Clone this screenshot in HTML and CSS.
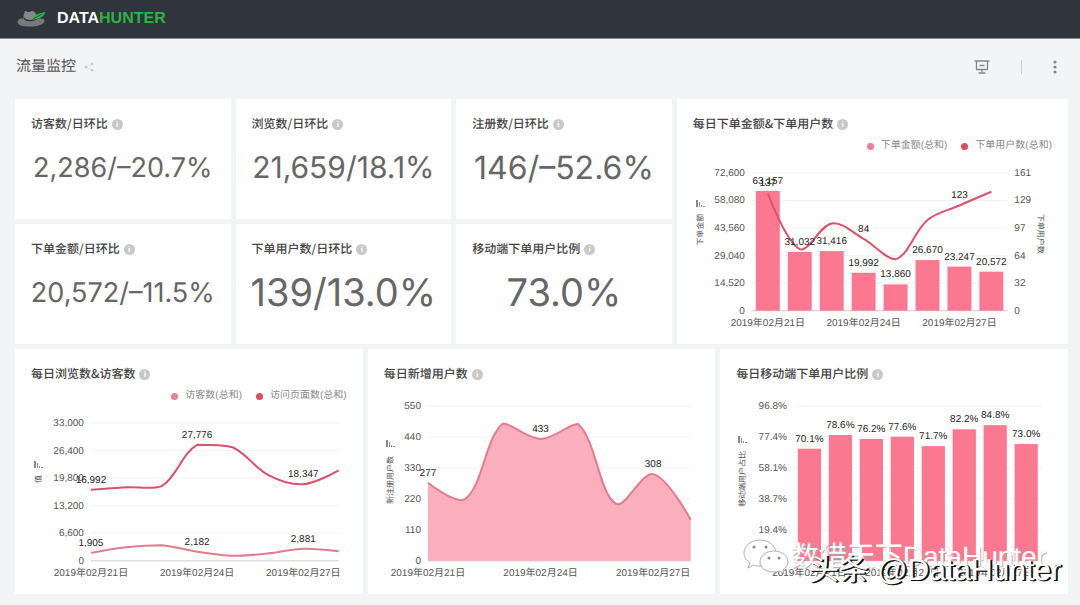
FILE: index.html
```html
<!DOCTYPE html>
<html lang="zh-CN">
<head>
    <meta charset="UTF-8">
    <meta name="viewport" content="width=device-width, initial-scale=1">
    <title>流量监控 - DataHunter</title>
    <link rel="stylesheet" href="styles.css">
</head>
<body>
    <!-- 顶部导航 -->
    <header class="navbar">
        <a href="#" class="brand">
            <svg class="brand-logo" viewBox="0 0 30 18" aria-hidden="true">
                <path d="M6.500 10 C7 6 7.500 3 8.500 1 C9.500 0.500 10.500 2 12 2 C14 2 15 0.500 16.500 1 C18.500 2 20 4 21 8 L21 12 L8 12 Z" fill="#85888a"/>
                <path d="M1 11.500 C2 8.500 5 8 7.500 8.500 C9 11.500 15 12.500 21 9 C25 8 28 8.500 28 11 C28 14.500 21 16.500 13 16.500 C5 16.500 0.500 14.500 1 11.500 Z" fill="#77797b"/>
                <path d="M7 8 C10 11.500 16 11.500 21 8.500" fill="none" stroke="#30343d" stroke-width="1.200"/>
                <path d="M15.500 9.500 C17 5 22 3 29 2 C27.500 7 22 9.500 15.500 9.500 Z" fill="#2fb344"/>
                <path d="M16 9.300 L25.500 4" stroke="#30343d" stroke-width="0.700"/>
            </svg>
            <span class="brand-name">DATA<span class="brand-green">HUNTER</span></span>
        </a>
    </header>

    <!-- 标题栏 -->
    <div class="toolbar">
        <h1>流量监控</h1>
        <button class="icon-btn share" aria-label="分享">
            <svg width="10" height="10" viewBox="0 0 10 10">
                <path d="M2 5 L8 2 M2 5 L8 8" stroke="#e6e6e6" fill="none"/>
                <circle cx="2" cy="5" r="1.500" fill="#ccc"/><circle cx="8" cy="1.800" r="1.400" fill="#ccc"/><circle cx="8" cy="8.200" r="1.400" fill="#ccc"/>
            </svg>
        </button>
        <div class="toolbar-actions">
            <button class="icon-btn" aria-label="演示">
                <svg width="16" height="14" viewBox="0 0 16 14" fill="none" stroke="#888">
                    <path d="M0.500 1 H15.500 M2.500 1 V9.500 H13.500 V1 M5.500 5.500 H10.500 M8 9.500 V13 M4.500 13 H11.500" stroke-width="1.300"/>
                </svg>
            </button>
            <span class="divider"></span>
            <button class="icon-btn" aria-label="更多">
                <svg width="4" height="14" viewBox="0 0 4 14" fill="#888">
                    <circle cx="2" cy="2" r="1.600"/><circle cx="2" cy="7" r="1.600"/><circle cx="2" cy="12" r="1.600"/>
                </svg>
            </button>
        </div>
    </div>

    <main class="board">
        <div class="row-top">
            <section class="card">
                <h2>访客数/日环比 <i class="info">i</i></h2>
                <p class="value value-sm">2,286/–20.7%</p>
            </section>
            <section class="card">
                <h2>浏览数/日环比 <i class="info">i</i></h2>
                <p class="value value-md">21,659/18.1%</p>
            </section>
            <section class="card">
                <h2>注册数/日环比 <i class="info">i</i></h2>
                <p class="value value-lg">146/–52.6%</p>
            </section>
            <section class="card card-tall">
                <h2>每日下单金额&amp;下单用户数 <i class="info">i</i></h2>
                <div class="legend">
                    <span><b class="dot dot-light"></b>下单金额(总和)</span>
                    <span><b class="dot dot-dark"></b>下单用户数(总和)</span>
                </div>
                <svg class="chart" id="chart-orders" viewBox="0 0 392 189"></svg>
            </section>
            <section class="card">
                <h2>下单金额/日环比 <i class="info">i</i></h2>
                <p class="value value-sm">20,572/–11.5%</p>
            </section>
            <section class="card">
                <h2>下单用户数/日环比 <i class="info">i</i></h2>
                <p class="value value-xl">139/13.0%</p>
            </section>
            <section class="card">
                <h2>移动端下单用户比例 <i class="info">i</i></h2>
                <p class="value value-xl">73.0%</p>
            </section>
        </div>

        <div class="row-bottom">
            <section class="card">
                <h2>每日浏览数&amp;访客数 <i class="info">i</i></h2>
                <div class="legend">
                    <span><b class="dot dot-soft"></b>访客数(总和)</span>
                    <span><b class="dot dot-dark"></b>访问页面数(总和)</span>
                </div>
                <svg class="chart" id="chart-views" viewBox="0 0 348 189"></svg>
            </section>
            <section class="card">
                <h2>每日新增用户数 <i class="info">i</i></h2>
                <svg class="chart" id="chart-users" viewBox="0 0 348 211"></svg>
            </section>
            <section class="card">
                <h2>每日移动端下单用户比例 <i class="info">i</i></h2>
                <svg class="chart" id="chart-mobile" viewBox="0 0 348 211"></svg>
                <!-- 水印 -->
                <div class="mark mark-wechat">
                    <svg width="46" height="36" viewBox="0 0 46 36" fill="#fff" stroke="#999" stroke-width="0.800">
                        <path d="M17 1 C8 1 1 7 1 14 C1 18 3 21 7 24 L5 29 L11 26 C13 27 15 27 18 27 C27 27 33 21 33 14 C33 7 26 1 17 1 Z"/>
                        <path d="M31 12 C23 12 17 17 17 23 C17 29 23 33 31 33 C33 33 35 33 37 32 L41 35 L40 31 C43 29 45 26 45 23 C45 17 39 12 31 12 Z"/>
                        <g fill="#888" stroke="none"><circle cx="11" cy="8" r="1.500"/><circle cx="23" cy="8" r="1.500"/><circle cx="26" cy="19" r="1.500"/><circle cx="36" cy="19" r="1.500"/></g>
                    </svg>
                    <span>数猎天下DataHunter</span>
                </div>
                <div class="mark mark-toutiao">头条 @DataHunter</div>
            </section>
        </div>
    </main>

<script src="charts.js"></script>
</body>
</html>
```
FILE: styles.css
```css
* { box-sizing: border-box; }
body { margin: 0; background: #f3f4f6; color: #444; font-family: "Liberation Sans", "Noto Sans CJK SC", sans-serif; text-rendering: geometricPrecision; }
h1, h2, p { margin: 0; }

.navbar { display: flex; align-items: center; height: 39px; padding: 0 16px; background: #30343d; border-bottom: 1px solid #85888e; }
.brand { display: flex; align-items: center; gap: 10px; color: #fff; text-decoration: none; }
.brand-logo { width: 31px; height: 18px; }
.brand-name { font-size: 16px; font-weight: bold; line-height: 20px; }
.brand-green { color: #2fb344; }

.toolbar { display: flex; align-items: center; height: 60px; padding: 0 23px 4px 16px; }
.toolbar h1 { font-size: 15px; font-weight: normal; line-height: 20px; color: #555; }
.toolbar-actions { display: flex; align-items: center; gap: 31px; margin-left: auto; }
.icon-btn { display: flex; padding: 0; border: 0; background: none; cursor: pointer; }
.share { margin-left: 8px; }
.divider { width: 1px; height: 14px; background: #ccc; }

.board { display: flex; flex-direction: column; gap: 5px; padding: 0 12px 11px 15px; }
.row-top { display: grid; grid-template-columns: 216fr 216fr 216fr 392fr; grid-auto-rows: minmax(120px, auto); gap: 5px; }
.row-bottom { display: grid; grid-template-columns: repeat(3, 1fr); gap: 5px; }
.card { position: relative; display: flex; flex-direction: column; min-width: 0; padding: 16px 0 0; background: #fff; }
.card-tall { grid-column: 4; grid-row: 1 / span 2; }
.card h2 { display: flex; align-items: center; gap: 4px; padding: 0 16px; font-family: "Noto Sans CJK SC", sans-serif; font-size: 12px; font-weight: 500; line-height: 18px; white-space: nowrap; }
.info { width: 11px; height: 11px; border-radius: 50%; background: #c8c8c8; color: #fff; font: bold 8px/11px "Liberation Sans", sans-serif; text-align: center; }

.value { flex: 1; display: flex; align-items: center; justify-content: center; padding-bottom: 17px; font-family: Inter, sans-serif; font-weight: 400; color: #666; white-space: nowrap; }
.value-sm { font-size: 27px; }
.value-md { font-size: 30px; }
.value-lg { font-size: 32px; }
.value-xl { font-size: 38px; }

.legend { display: flex; justify-content: flex-end; gap: 14px; margin-top: 4px; padding: 0 16px; font-size: 10px; line-height: 18px; color: #888; white-space: nowrap; }
.legend span { display: flex; align-items: center; gap: 7px; }
.dot { width: 7px; height: 7px; border-radius: 50%; }
.dot-light { background: #fb7a92; }
.dot-soft { background: #e88291; }
.dot-dark { background: #dd4a63; }

.chart { display: block; width: 100%; height: auto; font-size: 10px; }
.grid { stroke: #f3f3f3; }
.axis { stroke: #ccc; }
.tick { fill: #555; }
.label { fill: #222; text-anchor: middle; }
.end { text-anchor: end; }
.mid { text-anchor: middle; }
.name { fill: #555; font-size: 8px; text-anchor: middle; }
.sort { fill: #888; }
.bar { fill: #fb7990; }
.area { fill: #fbaebc; }
.line { fill: none; stroke-width: 2; }
.line-dark { stroke: #dd5069; }
.line-soft { stroke: #e07c90; }

.mark { position: absolute; white-space: nowrap; font-family: "Liberation Sans", "Noto Sans CJK SC", sans-serif; color: #fff; }
.mark-wechat { right: 22px; bottom: 17px; display: flex; align-items: center; gap: 2px; font-size: 28px; line-height: 40px; text-shadow: 1px 1px 1px #aaa; }
.mark-toutiao { right: 7px; bottom: 3px; font-size: 30px; line-height: 40px; text-shadow: 1px 1px 0 #111, 2px 1px 0 #111; }
```
FILE: charts.js
```js
const dates = { 0: '2019年02月21日', 3: '2019年02月24日', 6: '2019年02月27日' };
const SMOOTH = 0.35;

// 平滑曲线，控制点限制在数据范围内
function smoothPath(pts) {
    const ys = pts.map(p => p[1]);
    const lo = Math.min(...ys);
    const hi = Math.max(...ys);
    const clamp = y => Math.max(lo, Math.min(hi, y));
    let d = `M${pts[0]}`;
    let out = pts[0];
    for (let i = 1; i < pts.length; i++) {
        const p = pts[i];
        const prev = pts[i - 1];
        const next = pts[i + 1];
        let cpIn = p;
        let cpOut = p;
        if (next) {
            const a = Math.hypot(p[0] - prev[0], p[1] - prev[1]);
            const b = Math.hypot(next[0] - p[0], next[1] - p[1]);
            const r = b / (a + b);
            const vx = (next[0] - prev[0]) * SMOOTH;
            const vy = (next[1] - prev[1]) * SMOOTH;
            cpIn = [p[0] - vx * (1 - r), clamp(p[1] - vy * (1 - r))];
            cpOut = [p[0] + vx * r, clamp(p[1] + vy * r)];
        }
        d += ` C${out} ${cpIn} ${p}`;
        out = cpOut;
    }
    return d;
}

function drawChart(id, o) {
    const { left, right, top, bottom } = o.box;
    const hasBars = o.series.some(s => s.type === 'bar');
    const step = hasBars ? (right - left) / 8 : (right - left) / 7;
    const xAt = i => left + step * (hasBars ? i + 0.5 : i);
    let grid = '';
    let shapes = '';
    let texts = '';

    o.ticks.forEach((t, i) => {
        const y = bottom - (bottom - top) * i / (o.ticks.length - 1);
        grid += `<line class="${i ? 'grid' : 'axis'}" x1="${left}" x2="${right}" y1="${y}" y2="${y}"/>`;
        grid += `<text class="tick end" x="${left - 7}" y="${y + 3}">${t}</text>`;
        if (o.ticksRight) grid += `<text class="tick" x="${right + 7}" y="${y + 3}">${o.ticksRight[i]}</text>`;
    });
    Object.keys(dates).forEach(i => {
        grid += `<text class="tick mid" x="${xAt(+i)}" y="${bottom + 15}">${dates[i]}</text>`;
    });

    o.series.forEach(s => {
        const pts = s.data.map((v, i) => [xAt(i), bottom - (bottom - top) * v / s.max]);
        if (s.type === 'bar') {
            const w = step * 0.75;
            pts.forEach(p => {
                shapes += `<rect class="bar" x="${p[0] - w / 2}" y="${p[1]}" width="${w}" height="${bottom - p[1]}"/>`;
            });
        } else {
            const d = smoothPath(pts);
            if (s.type === 'area') shapes += `<path class="area" d="${d} L${right},${bottom} L${left},${bottom} Z"/>`;
            shapes += `<path class="line ${s.cls}" d="${d}"/>`;
        }
        Object.keys(s.labels).forEach(i => {
            texts += `<text class="label" x="${pts[i][0]}" y="${pts[i][1] - 7}">${s.labels[i]}</text>`;
        });
    });

    // 坐标轴名称和排序图标
    const n = o.name;
    texts += `<text class="name" transform="translate(${n.x + 3} ${n.y}) rotate(-90)">${n.text}</text>`;
    texts += `<path class="sort" transform="translate(${n.x - 4} ${n.iconY})" d="M0 0h2v7h-2z M3 2h1v5h-1z M5 5h1v2h-1z M7 6h2v1h-2z"/>`;
    if (o.nameRight) texts += `<text class="name" transform="translate(${o.nameRight.x - 3} ${o.nameRight.y}) rotate(90)">${o.nameRight.text}</text>`;

    document.getElementById(id).innerHTML = grid + shapes + texts;
}

drawChart('chart-orders', {
    box: { left: 75, right: 331, top: 18, bottom: 156 },
    ticks: ['0', '14,520', '29,040', '43,560', '58,080', '72,600'],
    ticksRight: ['0', '32', '64', '97', '129', '161'],
    name: { text: '下单金额', x: 23, y: 75, iconY: 45 },
    nameRight: { text: '下单用户数', x: 365, y: 79 },
    series: [
        { type: 'bar', max: 72600, data: [63157, 31032, 31416, 19992, 13860, 26670, 23247, 20572],
          labels: ['63,157', '31,032', '31,416', '19,992', '13,860', '26,670', '23,247', '20,572'] },
        { type: 'line', cls: 'line-dark', max: 161, data: [137, 72, 102, 84, 60, 106, 123, 139],
          labels: { 0: '137', 3: '84', 6: '123' } }
    ]
});

drawChart('chart-views', {
    box: { left: 76, right: 324, top: 18, bottom: 156 },
    ticks: ['0', '6,600', '13,200', '19,800', '26,400', '33,000'],
    name: { text: '值', x: 23, y: 74, iconY: 56 },
    series: [
        { type: 'line', cls: 'line-soft', max: 33000, data: [1905, 3280, 3760, 2182, 1200, 1750, 2881, 2286],
          labels: { 0: '1,905', 3: '2,182', 6: '2,881' } },
        { type: 'line', cls: 'line-dark', max: 33000, data: [16992, 17600, 17900, 27776, 27200, 20600, 18347, 21659],
          labels: { 0: '16,992', 3: '27,776', 6: '18,347' } }
    ]
});

drawChart('chart-users', {
    box: { left: 60, right: 323, top: 23, bottom: 178 },
    ticks: ['0', '110', '220', '330', '440', '550'],
    name: { text: '新注册用户数', x: 22, y: 97, iconY: 57 },
    series: [
        { type: 'area', cls: 'line-soft', max: 550, data: [277, 220, 488, 433, 486, 203, 308, 146],
          labels: { 0: '277', 3: '433', 6: '308' } }
    ]
});

drawChart('chart-mobile', {
    box: { left: 74, right: 322, top: 23, bottom: 178 },
    ticks: ['0', '19.4%', '38.7%', '58.1%', '77.4%', '96.8%'],
    name: { text: '移动端用户占比', x: 22, y: 96, iconY: 53 },
    series: [
        { type: 'bar', max: 96.8, data: [70.1, 78.6, 76.2, 77.6, 71.7, 82.2, 84.8, 73.0],
          labels: ['70.1%', '78.6%', '76.2%', '77.6%', '71.7%', '82.2%', '84.8%', '73.0%'] }
    ]
});
```
